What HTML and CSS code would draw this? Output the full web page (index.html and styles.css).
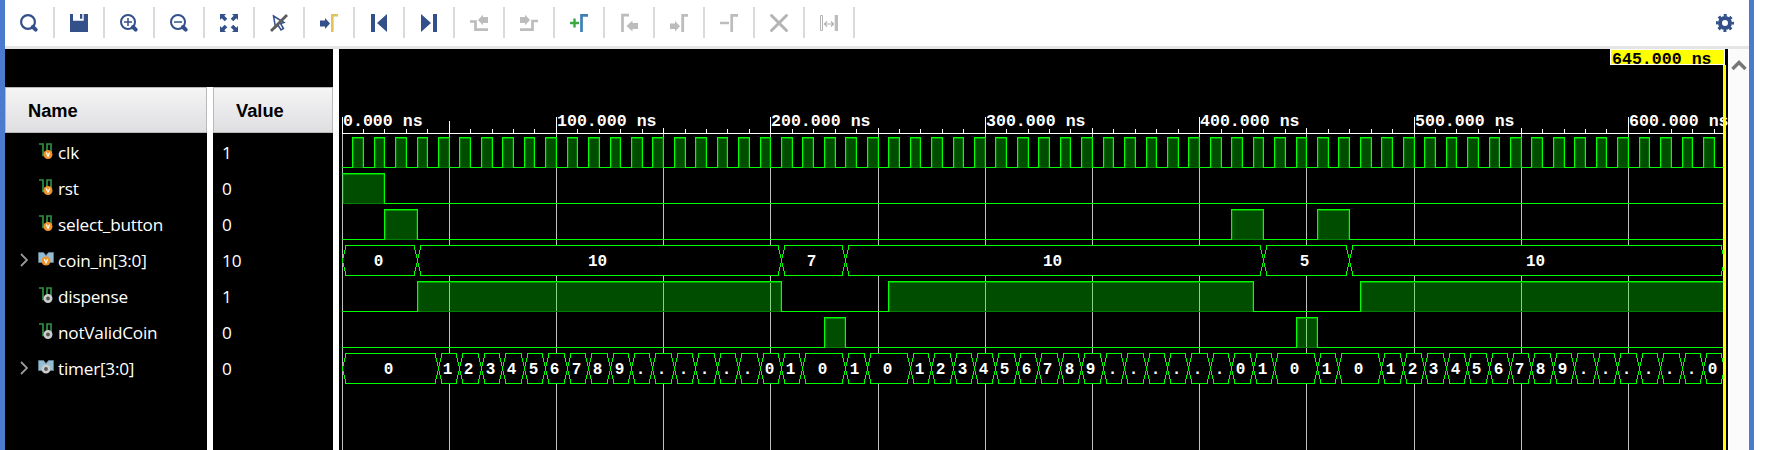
FILE: index.html
```html
<!DOCTYPE html>
<html lang="en">
<head>
<meta charset="utf-8">
<title>Waveform viewer</title>
<link rel="stylesheet" href="styles.css">
</head>
<body>
<svg class="defs" width="0" height="0">
  <symbol id="scalar" viewBox="0 0 16 18"><path d="M1 1H5V12.500H8M9 10V1H13V10" fill="none" stroke="#2f8f45" stroke-width="1.700"/></symbol>
  <symbol id="bus" viewBox="0 0 16 18"><path d="M.5 1.500H5.500L8 4.500L10.500 1.500H15.500V11.500H.5Z" fill="#94bdd3" stroke="#5f7f90" stroke-width=".8"/></symbol>
</svg>
<div class="window">
  <header class="toolbar">
    <div class="tools">
      <span class="tool"><svg viewBox="0 0 18 18"><circle cx="8" cy="8" r="6.900" fill="none" stroke="#34508a" stroke-width="2.200"/><path d="M12.800 12.800L15.700 15.700" stroke="#34508a" stroke-width="4" stroke-linecap="round"/></svg></span>
      <span class="tool"><svg viewBox="0 0 18 18"><path d="M0 0H3V6.700H13.700V0H18V18H0ZM10 0H12.300V4.700H10Z" fill="#34508a"/></svg></span>
      <span class="tool"><svg viewBox="0 0 18 18"><circle cx="8" cy="8" r="7" fill="none" stroke="#34508a" stroke-width="2"/><path d="M4 8H12M8 4V12" stroke="#34508a" stroke-width="1.500"/><path d="M13 13L15.700 15.700" stroke="#34508a" stroke-width="4" stroke-linecap="round"/></svg></span>
      <span class="tool"><svg viewBox="0 0 18 18"><circle cx="8" cy="8" r="7" fill="none" stroke="#34508a" stroke-width="2"/><path d="M4 8H12" stroke="#34508a" stroke-width="1.500"/><path d="M13 13L15.700 15.700" stroke="#34508a" stroke-width="4" stroke-linecap="round"/></svg></span>
      <span class="tool"><svg viewBox="0 0 18 18"><path d="M0 0H6L4.300 1.700L7.300 4.700L4.700 7.300L1.700 4.300L0 6ZM18 0V6L16.300 4.300L13.300 7.300L10.700 4.700L13.700 1.700L12 0ZM0 18V12L1.700 13.700L4.700 10.700L7.300 13.300L4.300 16.300L6 18ZM18 18H12L13.700 16.300L10.700 13.300L13.300 10.700L16.300 13.700L18 12Z" fill="#34508a"/></svg></span>
      <span class="tool"><svg viewBox="0 0 18 18"><path d="M3.500 2L14 8.500L10.500 9.500L13.500 14.500L11 16L8 11L5.500 13.500Z" fill="none" stroke="#34508a" stroke-width="1.500"/><path d="M1 17L17 1" stroke="#5c5c5c" stroke-width="2.900"/></svg></span>
      <span class="tool"><svg viewBox="0 0 18 18"><path d="M0 6.500H5V4L10 9.500L5 15V12.500H0Z" fill="#34508a"/><path d="M12.300 18V1.300H18" fill="none" stroke="#dfc45c" stroke-width="2.600"/></svg></span>
      <span class="tool"><svg viewBox="0 0 18 18"><path d="M1 0H5V18H1ZM17 0V18L7 9Z" fill="#34508a"/></svg></span>
      <span class="tool"><svg viewBox="0 0 18 18"><path d="M17 0H13V18H17ZM1 0V18L11 9Z" fill="#34508a"/></svg></span>
      <span class="tool"><svg viewBox="0 0 18 18"><path d="M0 7.500H5.500V15.700H18" fill="none" stroke="#bcbcbc" stroke-width="2.700"/><path d="M18 3H13V.7L8 6L13 11.300V9H18Z" fill="#bcbcbc"/></svg></span>
      <span class="tool"><svg viewBox="0 0 18 18"><path d="M18 7H12.500V15.700H0" fill="none" stroke="#bcbcbc" stroke-width="2.700"/><path d="M0 3H5V.7L10 6L5 11.300V9H0Z" fill="#bcbcbc"/></svg></span>
      <span class="tool"><svg viewBox="0 0 18 18"><path d="M0 9H9M4.500 4.500V13.500" stroke="#3ba943" stroke-width="2.400"/><path d="M11.500 18V1.300H18" fill="none" stroke="#3d80b5" stroke-width="2.700"/></svg></span>
      <span class="tool"><svg viewBox="0 0 18 18"><path d="M2.500 18V1.200H9" fill="none" stroke="#bcbcbc" stroke-width="2.700"/><path d="M18 9H12.500V6.500L6.500 12L12.500 17.500V15H18Z" fill="#bcbcbc"/></svg></span>
      <span class="tool"><svg viewBox="0 0 18 18"><path d="M12.700 18V1.300H18" fill="none" stroke="#bcbcbc" stroke-width="2.800"/><path d="M0 9.500H5V7L10 12.200L5 17.500V15H0Z" fill="#bcbcbc"/></svg></span>
      <span class="tool"><svg viewBox="0 0 18 18"><path d="M11.700 18V1.300H18M0 9H9" fill="none" stroke="#bcbcbc" stroke-width="2.700"/></svg></span>
      <span class="tool"><svg viewBox="0 0 18 18"><path d="M1.500 1.500L16.500 16.500M16.500 1.500L1.500 16.500" stroke="#b4b4b4" stroke-width="3" stroke-linecap="round"/></svg></span>
      <span class="tool"><svg viewBox="0 0 18 18"><path d="M.5 1.500H2.500V16.500H.5Z" fill="none" stroke="#b4b4b4"/><path d="M14.700 1H18V17H14.700Z" fill="#bcbcbc"/><path d="M4.500 10H13.500M7 7.500L4.500 10L7 12.500M11 7.500L13.500 10L11 12.500" fill="none" stroke="#b0b0b0" stroke-width="1.200"/></svg></span>
    </div>
    <svg class="gear" viewBox="0 0 18 18"><circle cx="9" cy="9" r="5" fill="none" stroke="#34508a" stroke-width="4"/><circle cx="9" cy="9" r="7.800" fill="none" stroke="#34508a" stroke-width="2.400" stroke-dasharray="3.060 3.066" stroke-dashoffset="1.530"/></svg>
  </header>
  <main class="viewer">
    <section class="signals">
      <div class="col names"><div class="head">Name</div><div class="rows" id="names"></div></div>
      <div class="col values"><div class="head">Value</div><div class="rows" id="values"></div></div>
    </section>
    <section class="wave">
      <svg id="plot" width="1389" height="401" viewBox="339 49 1389 401"></svg>
      <div class="cursor-line"></div>
      <div class="cursor-label">645.000 ns</div>
    </section>
    <aside class="scroll"><svg width="16" height="11" viewBox="0 0 16 11"><path d="M1.500 9L8 2.500L14.500 9" fill="none" stroke="#777" stroke-width="3.400"/></svg></aside>
  </main>
</div>
<script src="wave.js"></script>
</body>
</html>
```

FILE: styles.css
```css
* { box-sizing: border-box; }
body { margin: 0; background: #fff; overflow: hidden; font-family: "Open Sans", "Noto Sans", sans-serif; }
.defs { position: absolute; }
.window { width: 1754px; height: 450px; border: solid #4a7bcf; border-width: 0 5px; display: flex; flex-direction: column; }
.toolbar { height: 49px; border-bottom: 3px solid #e5e5e5; display: flex; justify-content: space-between; padding: 7px 15px 0 0; }
.tools { display: flex; height: 31px; }
.tool { width: 50px; padding: 7px 0 0 15px; border-right: 2px solid #dadada; }
.tool svg { display: block; width: 18px; height: 18px; overflow: visible; }
.gear { width: 18px; height: 18px; margin-top: 7px; }
.viewer { flex: 1; display: flex; }
.signals { width: 328px; border-top: 38px solid #000; background: #fff; display: flex; gap: 6px; }
.col { background: #000; color: #fff; }
.names { width: 202px; }
.values { width: 120px; }
.head { height: 46px; border: 1px solid #b9b9b9; background: linear-gradient(#f5f5f5, #dfdfe2); color: #000; font: bold 18.3px/45px "Liberation Sans", sans-serif; padding-left: 22px; }
.rows { padding-top: 1px; }
.row { height: 36px; display: flex; align-items: center; font-size: 17.2px; line-height: 36px; white-space: pre; }
.row span { padding-top: 1px; }
.names .row { padding-left: 15px; letter-spacing: -0.22px; }
.values .row { padding-left: 9px; }
.twist { width: 8px; height: 14px; margin-right: 10px; }
.sig { width: 16px; height: 18px; margin-right: 4px; }
.wave { width: 1389px; margin-left: 6px; background: #000; position: relative; }
.wave svg { display: block; }
.cursor-line { position: absolute; left: 1384px; top: 16px; width: 3px; height: 385px; background: #ff0; }
.cursor-label { position: absolute; left: 1271px; top: 0; width: 115px; height: 16px; background: #ff0; border: 1px solid #fff; color: #000; font: bold 16.6px/19px "Liberation Mono", monospace; padding-left: 1px; white-space: pre; }
.mono { font: bold 16.6px "Liberation Mono", monospace; fill: #fff; white-space: pre; }
.bus-text { font-size: 16px; text-anchor: middle; }
.scroll { flex: 1; margin: 0 1px 0 2px; background: #fbfbfb; padding: 5px 0 0 1px; }
```

FILE: wave.js
```js
const signals = [
  ["clk", "1", "scalar", "v"], ["rst", "0", "scalar", "v"], ["select_button", "0", "scalar", "v"],
  ["coin_in[3:0]", "10", "bus", "v"], ["dispense", "1", "scalar", "o"],
  ["notValidCoin", "0", "scalar", "o"], ["timer[3:0]", "0", "bus", "o"]
];
function badge(kind, mark) {
  const x = kind === "bus" ? 8 : 10, y = kind === "bus" ? 10 : 11.5;
  return mark === "v"
    ? `<circle cx="${x}" cy="${y}" r="4.500" fill="#f0932b"/><path d="M${x - 1.7} ${y - 2}L${x} ${y + 1.7}L${x + 1.7} ${y - 2}" fill="none" stroke="#fff" stroke-width="1.200"/>`
    : `<circle cx="${x}" cy="${y}" r="3.200" fill="#555" stroke="#ccc" stroke-width="2.600"/>`;
}
document.getElementById("names").innerHTML = signals.map(([name, , kind, mark]) =>
  `<div class="row"><svg class="twist" viewBox="0 0 8 14">${kind === "bus" ? '<path d="M1 1L7 7L1 13" fill="none" stroke="#999" stroke-width="1.800"/>' : ""}</svg><svg class="sig" viewBox="0 0 16 18"><use href="#${kind}"/>${badge(kind, mark)}</svg><span>${name}</span></div>`).join("");
document.getElementById("values").innerHTML = signals.map(s => `<div class="row"><span>${s[1]}</span></div>`).join("");

const END = 645;
const X = t => 342 + Math.floor(t * 2.144);
const rect = (x, y, w, h, f) => `<rect x="${x}" y="${y}" width="${w}" height="${h}" fill="${f}"/>`;
let out = "";

// Time axis and grid
for (let t = 0; t <= 640; t += 10) {
  const x = X(t);
  const top = t % 100 === 0 ? 117 : t === 50 ? 121 : t % 50 === 0 ? 128 : 129;
  out += rect(x, top, 1, 133 - top, "#fff");
  if (t % 50 === 0) out += rect(x, 134, 1, 316, "#c0c0c0");
  if (t % 100 === 0) out += `<text class="mono" x="${x + 1}" y="126">${t}.000 ns</text>`;
}
out += rect(342, 133, 1382, 1, "#fff");

// Digital signals: intervals where the level is high
function digital(top, pulses) {
  const low = top + 30;
  let at = 342;
  for (const [a, b] of pulses) {
    const x0 = X(a), x1 = X(b);
    out += rect(at, low, x0 - at, 1, "#0f0");
    out += rect(x0, top, x1 - x0 + 1, 31, "rgba(0,255,0,.3)");
    out += rect(x0, top, x1 - x0 + 1, 1, "#0f0") + rect(x0 + 1, top + 1, x1 - x0 - 1, 1, "#009c00");
    out += rect(x0 + 1, top + 2, 1, 28, "#007800") + rect(x1 - 1, top + 2, 1, 28, "#007800");
    out += rect(x0 + 1, low, x1 - x0 - 1, 1, "#008000");
    if (a > 0) out += rect(x0, top, 1, 31, "#0f0");
    out += rect(x1, top, 1, 31, "#0f0");
    at = x1;
  }
  out += rect(at, low, Math.max(0, X(END) - at), 1, "#0f0");
}
// Buses: [end time, label] for each value
function bus(top, items) {
  let t = 0;
  for (const [end, label] of items) {
    const a = X(t) + .5, b = X(end) + .5, y0 = top + .5, m = top + 15.5, y1 = top + 30.5;
    out += `<path d="M${a} ${m}L${a + 3.500} ${y0}H${b - 3.500}L${b} ${m}L${b - 3.500} ${y1}H${a + 3.500}Z" fill="#000" stroke="#0f0" shape-rendering="crispEdges"/>`;
    out += `<text class="mono bus-text" x="${Math.floor((a + b) / 2) - 1.5}" y="${top + 21}">${label}</text>`;
    t = end;
  }
}
const clk = [];
for (let t = 5; t < 640; t += 10) clk.push([t, t + 5]);
digital(137, clk);
digital(173, [[0, 20]]);
digital(209, [[20, 35], [415, 430], [455, 470]]);
bus(245, [[35, "0"], [205, "10"], [235, "7"], [430, "10"], [470, "5"], [END, "10"]]);
digital(281, [[35, 205], [255, 425], [475, END]]);
digital(317, [[225, 235], [445, 455]]);
const timer = [];
const count = start => [..."123456789......"].forEach((c, i) => timer.push([start + 10 * (i + 1), c]));
timer.push([45, "0"]); count(45);
timer.push([205, "0"], [215, "1"], [235, "0"], [245, "1"], [265, "0"]); count(265);
timer.push([425, "0"], [435, "1"], [455, "0"], [465, "1"], [485, "0"]); count(485);
timer.push([END, "0"]);
bus(353, timer);
document.getElementById("plot").innerHTML = out;
```
